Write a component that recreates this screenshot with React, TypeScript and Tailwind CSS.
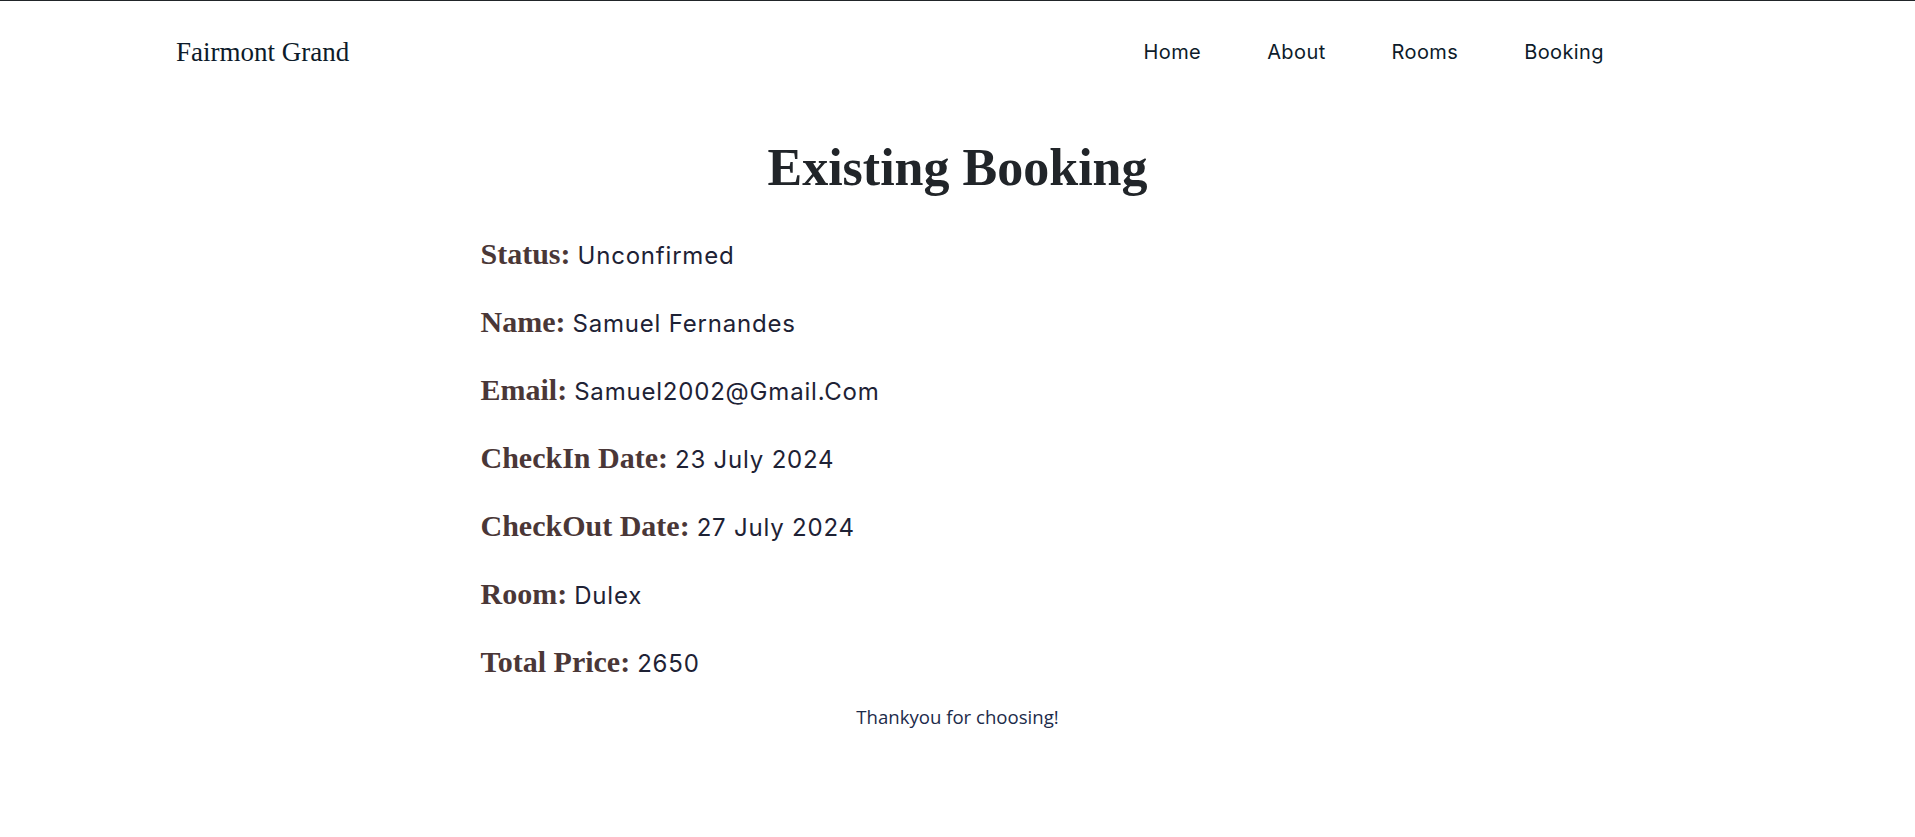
import React from "react";

const serif = "font-['Liberation_Serif','Times_New_Roman',serif]";
const sans = "font-['Inter','Liberation_Sans',sans-serif]";

const details: { label: string; value: string }[] = [
  { label: "Status:", value: "Unconfirmed" },
  { label: "Name:", value: "Samuel Fernandes" },
  { label: "Email:", value: "Samuel2002@Gmail.Com" },
  { label: "CheckIn Date:", value: "23 July 2024" },
  { label: "CheckOut Date:", value: "27 July 2024" },
  { label: "Room:", value: "Dulex" },
  { label: "Total Price:", value: "2650" },
];

const links = ["Home", "About", "Rooms", "Booking"];

const App: React.FC = () => {
  return (
    <div className="min-h-screen bg-white border-t border-[#212529]">
      <header className="flex h-[102px] items-center justify-between pl-[176px] pr-[311px]">
        <div className={`${serif} text-[27px] text-[#0d1b2a]`}>Fairmont Grand</div>
        <nav className={`${sans} flex gap-[66px] text-[20px] tracking-[0.4px] text-[#0d1b2a]`}>
          {links.map((l) => (
            <a key={l} href="#" className="hover:underline">
              {l}
            </a>
          ))}
        </nav>
      </header>

      <main className="mx-auto max-w-[960px] pt-[34px]">
        <h1 className={`${serif} text-center text-[52px] font-bold leading-[1.2] text-[#212529]`}>
          Existing Booking
        </h1>
        <div className="mt-[35px] flex flex-col pl-[3px]">
          {details.map((d) => (
            <div key={d.label} className="h-[68px] leading-[40px]">
              <span className={`${serif} text-[30px] font-bold text-[#4a3737]`}>{d.label}</span>
              <span className={`${sans} ml-[7px] text-[24px] tracking-[0.8px] text-[#1e2235]`}>{d.value}</span>
            </div>
          ))}
        </div>
        <p className="-mt-[7px] text-center font-['Open_Sans','Noto_Sans',sans-serif] text-[18.6px] text-[#1c2b4a]">
          Thankyou for choosing!
        </p>
      </main>
    </div>
  );
};

export default App;
